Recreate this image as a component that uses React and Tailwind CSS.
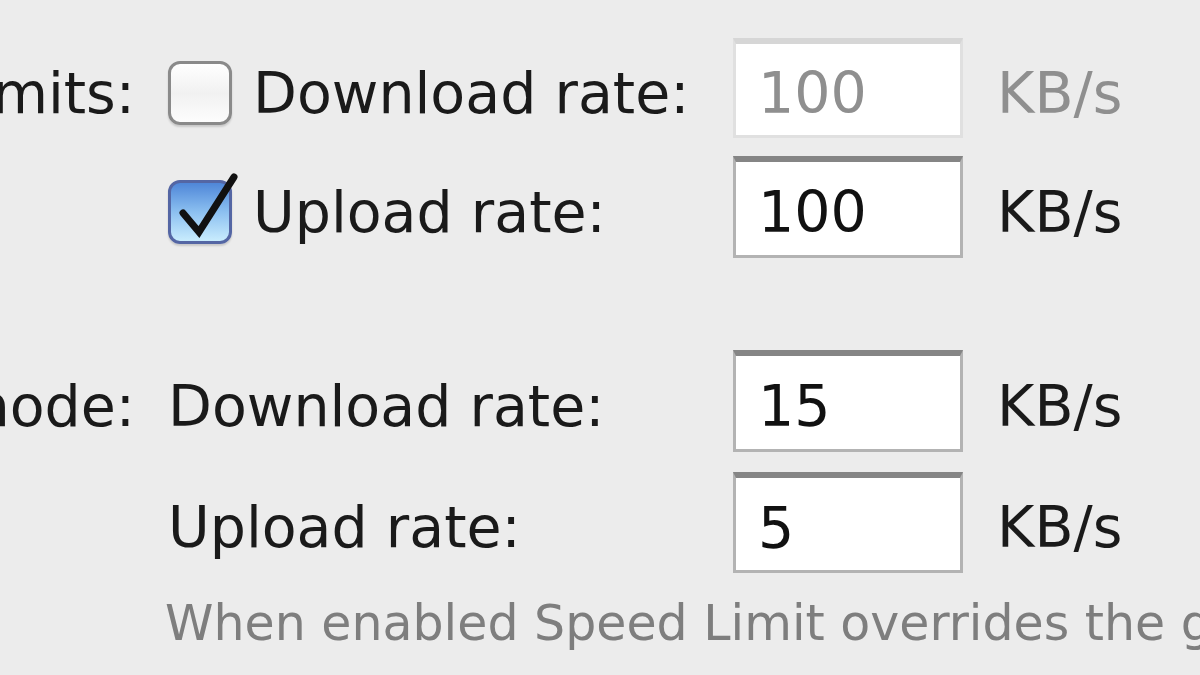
import React from "react";

const font = { fontFamily: '"DejaVu Sans", Verdana, sans-serif' };

function Checkbox({ checked }) {
  if (!checked) {
    return (
      <div className="w-[64px] h-[64px] shrink-0 rounded-[12px] border-[3px] border-[#8a8a8a] bg-gradient-to-b from-[#ffffff] via-[#f1f1f1] to-[#fdfdfd] shadow-[0_2px_2px_rgba(0,0,0,0.15)]" />
    );
  }
  return (
    <div className="relative w-[64px] h-[64px] shrink-0">
      <div className="w-full h-full rounded-[12px] border-[3px] border-[#5466a4] bg-gradient-to-b from-[#4f86d8] via-[#8cc0f0] to-[#c9ecfd] shadow-[0_2px_2px_rgba(0,0,0,0.15)]" />
      <svg className="absolute -top-[12px] left-0" width="72" height="80" viewBox="0 0 72 80">
        <path d="M15 45 L31 64 L66 9" fill="none" stroke="#111" strokeWidth="7" strokeLinecap="round" strokeLinejoin="miter" />
      </svg>
    </div>
  );
}

function RateField({ value, disabled }) {
  return (
    <div
      className={
        "w-[230px] h-full bg-white flex items-center pl-[22px] pt-[8px] border-x-[3px] border-b-[3px] border-t-[6px] " +
        (disabled
          ? "border-[#e0e0e0] border-t-[#d6d6d6] text-[#8f8f8f]"
          : "border-[#b3b3b3] border-t-[#858585] text-[#111]")
      }
    >
      {value}
    </div>
  );
}

function Row({ label, check, text, value, disabled, className }) {
  return (
    <div className={"flex items-center " + className}>
      <div className="w-[135px] pt-[10px] shrink-0 overflow-hidden flex justify-end whitespace-nowrap text-[#1a1a1a]">
        {label}
      </div>
      <div className="w-[565px] ml-[33px] pt-[10px] shrink-0 flex items-center gap-[21px] whitespace-nowrap text-[#1a1a1a]">
        {check !== undefined && <Checkbox checked={check} />}
        <span>{text}</span>
      </div>
      <RateField value={value} disabled={disabled} />
      <span className={"ml-[34px] pt-[10px] " + (disabled ? "text-[#8f8f8f]" : "text-[#1a1a1a]")}>KB/s</span>
    </div>
  );
}

export default function App() {
  return (
    <div className="w-[1200px] h-[675px] overflow-hidden bg-[#ececec] text-[57px] leading-none" style={font}>
      <div className="pt-[38px]">
        <Row className="h-[100px]" label="Global limits:" check={false} text="Download rate:" value="100" disabled />
        <Row className="h-[102px] mt-[18px]" label="" check={true} text="Upload rate:" value="100" />
        <Row className="h-[102px] mt-[92px]" label="Speed Limit mode:" text="Download rate:" value="15" />
        <Row className="h-[101px] mt-[20px]" label="" text="Upload rate:" value="5" />
        <p className="ml-[165px] mt-[26px] whitespace-nowrap text-[49px] text-[#7e7e7e]">
          When enabled Speed Limit overrides the global bandwidth limits
        </p>
      </div>
    </div>
  );
}
